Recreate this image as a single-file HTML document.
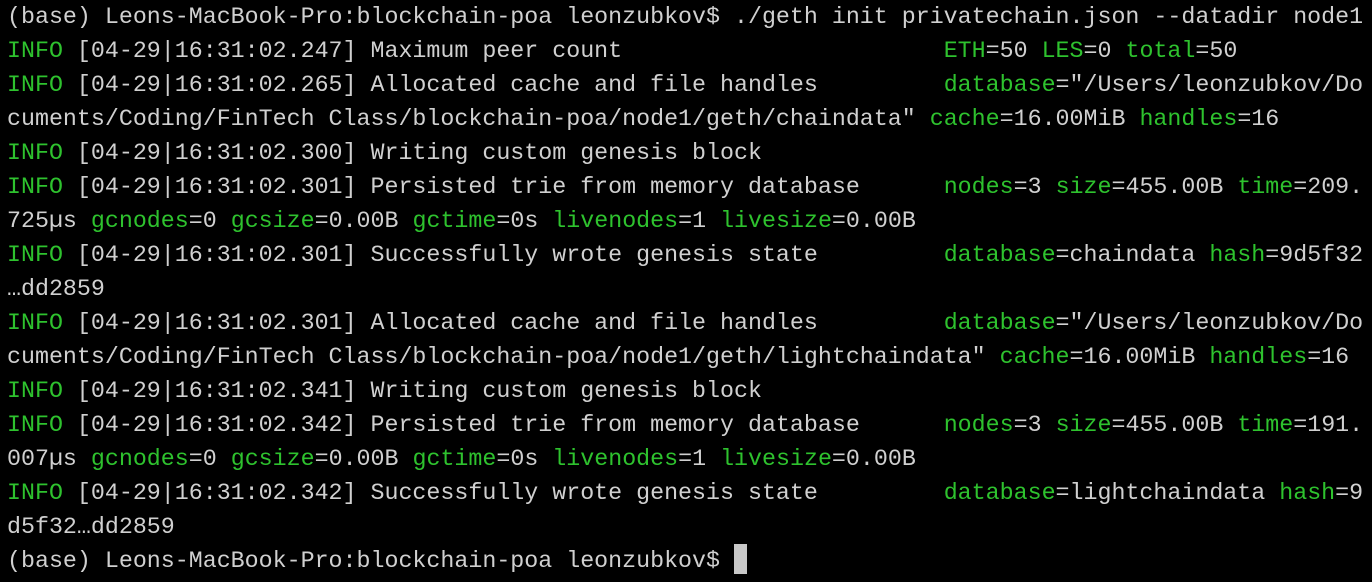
<!DOCTYPE html><html><head><style>
html,body{margin:0;background:#000;width:1372px;height:582px;overflow:hidden}
pre{margin:0;padding:0 0 0 7px;font-family:"Liberation Mono",monospace;font-size:23.3px;line-height:34px;color:#d0d0d0;white-space:pre}
g{color:#2ec22e}
.c{display:inline-block;width:13px;height:30px;background:#c8c8c8;vertical-align:-7px}
</style></head><body><pre>(base) Leons-MacBook-Pro:blockchain-poa leonzubkov$ ./geth init privatechain.json --datadir node1
<g>INFO</g> [04-29|16:31:02.247] Maximum peer count                       <g>ETH</g>=50 <g>LES</g>=0 <g>total</g>=50
<g>INFO</g> [04-29|16:31:02.265] Allocated cache and file handles         <g>database</g>="/Users/leonzubkov/Do
cuments/Coding/FinTech Class/blockchain-poa/node1/geth/chaindata" <g>cache</g>=16.00MiB <g>handles</g>=16
<g>INFO</g> [04-29|16:31:02.300] Writing custom genesis block
<g>INFO</g> [04-29|16:31:02.301] Persisted trie from memory database      <g>nodes</g>=3 <g>size</g>=455.00B <g>time</g>=209.
725µs <g>gcnodes</g>=0 <g>gcsize</g>=0.00B <g>gctime</g>=0s <g>livenodes</g>=1 <g>livesize</g>=0.00B
<g>INFO</g> [04-29|16:31:02.301] Successfully wrote genesis state         <g>database</g>=chaindata <g>hash</g>=9d5f32
…dd2859
<g>INFO</g> [04-29|16:31:02.301] Allocated cache and file handles         <g>database</g>="/Users/leonzubkov/Do
cuments/Coding/FinTech Class/blockchain-poa/node1/geth/lightchaindata" <g>cache</g>=16.00MiB <g>handles</g>=16
<g>INFO</g> [04-29|16:31:02.341] Writing custom genesis block
<g>INFO</g> [04-29|16:31:02.342] Persisted trie from memory database      <g>nodes</g>=3 <g>size</g>=455.00B <g>time</g>=191.
007µs <g>gcnodes</g>=0 <g>gcsize</g>=0.00B <g>gctime</g>=0s <g>livenodes</g>=1 <g>livesize</g>=0.00B
<g>INFO</g> [04-29|16:31:02.342] Successfully wrote genesis state         <g>database</g>=lightchaindata <g>hash</g>=9
d5f32…dd2859
(base) Leons-MacBook-Pro:blockchain-poa leonzubkov$ <span class="c"></span></pre></body></html>
